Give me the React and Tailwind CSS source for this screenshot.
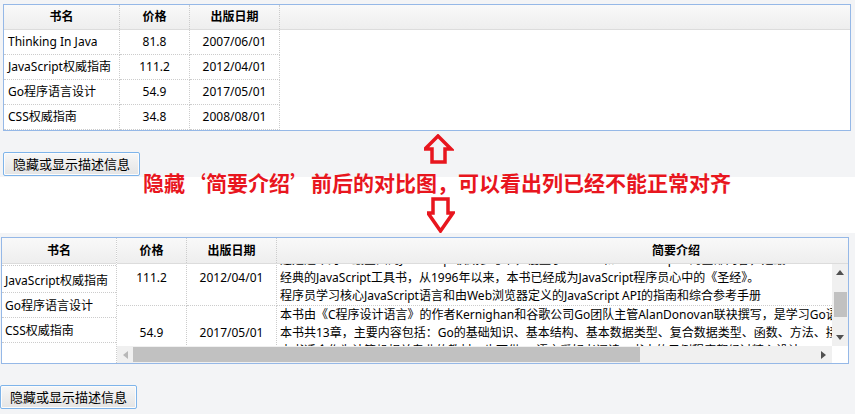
import React from "react";

const topRows = [
  { name: "Thinking In Java", price: "81.8", date: "2007/06/01" },
  { name: "JavaScript权威指南", price: "111.2", date: "2012/04/01" },
  { name: "Go程序语言设计", price: "54.9", date: "2017/05/01" },
  { name: "CSS权威指南", price: "34.8", date: "2008/08/01" },
];

const descRows = [
  {
    price: "111.2",
    date: "2012/04/01",
    lines: [
      "这是迄今为止最全面的JavaScript权威参考书，覆盖了HTML5和ECMAScript 5的全部内容，是最",
      "经典的JavaScript工具书，从1996年以来，本书已经成为JavaScript程序员心中的《圣经》。",
      "程序员学习核心JavaScript语言和由Web浏览器定义的JavaScript API的指南和综合参考手册",
    ],
  },
  {
    price: "54.9",
    date: "2017/05/01",
    lines: [
      "本书由《C程序设计语言》的作者Kernighan和谷歌公司Go团队主管AlanDonovan联袂撰写，是学习Go语言程序设计的权威指南。",
      "本书共13章，主要内容包括：Go的基础知识、基本结构、基本数据类型、复合数据类型、函数、方法、接口、goroutine、通道、共享变量的并发性、包、go工具、测试、反射等。",
      "本书适合作为计算机相关专业的教材，也可供Go语言爱好者阅读，书中的示例程序都经过精心设计。",
    ],
  },
];

const headCell =
  "h-full flex items-center justify-center font-bold border-r border-dotted border-[#ccc]";
const dotB = "border-b border-dotted border-[#ccc]";

function ToggleButton({ className }) {
  return (
    <button
      className={
        "h-[24px] w-[137px] border border-[#7eb4ea] rounded-[2px] bg-gradient-to-b from-[#f7f7f7] to-[#e4e4e4] shadow-[inset_0_0_0_1px_#fcfcfc] text-[13px] text-black leading-none " +
        className
      }
    >
      隐藏或显示描述信息
    </button>
  );
}

function GridHeader({ children }) {
  return (
    <div className="h-[26px] flex border-b border-[#dcdcdc] bg-gradient-to-b from-[#f9f9f9] to-[#eeeeee]">
      {children}
    </div>
  );
}

function TopGrid() {
  return (
    <div className="w-[848px] h-[127px] border border-[#95b8e7] bg-white flex flex-col">
      <div className="h-[25px] flex border-b border-[#dcdcdc] bg-gradient-to-b from-[#f9f9f9] to-[#eeeeee]">
        <div className={headCell + " w-[116px]"}>书名</div>
        <div className={headCell + " w-[70px]"}>价格</div>
        <div className={headCell + " w-[90px]"}>出版日期</div>
      </div>
      {topRows.map((r) => (
        <div key={r.name} className="h-[25px] flex">
          <div className={dotB + " w-[116px] border-r border-dotted flex items-center pl-[4px]"}>
            {r.name}
          </div>
          <div className={dotB + " w-[70px] border-r border-dotted flex items-center justify-center"}>
            {r.price}
          </div>
          <div className={dotB + " w-[90px] border-r border-dotted flex items-center justify-center"}>
            {r.date}
          </div>
        </div>
      ))}
    </div>
  );
}

function Arrow({ dir }) {
  // small triangle used by the scrollbar buttons
  const pts = {
    up: "0,5 4,0 8,5",
    down: "0,0 8,0 4,5",
    left: "5,0 5,8 0,4",
    right: "0,0 0,8 5,4",
  }[dir];
  const horizontal = dir === "left" || dir === "right";
  return (
    <svg width={horizontal ? 5 : 8} height={horizontal ? 8 : 5}>
      <polygon points={pts} fill={dir === "left" ? "#b8b8b8" : "#505050"} />
    </svg>
  );
}

function BottomGrid() {
  return (
    <div className="w-[848px] h-[127px] border border-[#95b8e7] bg-white flex">
      {/* frozen column */}
      <div className="w-[115px] shrink-0 border-r border-dotted border-[#ccc] flex flex-col">
        <GridHeader>
          <div className="w-full flex items-center justify-center font-bold">书名</div>
        </GridHeader>
        <div className={dotB + " h-[2px]"} />
        <div className={dotB + " h-[27px] flex items-center pl-[3px] pt-[3px]"}>JavaScript权威指南</div>
        <div className={dotB + " h-[25px] flex items-center pl-[3px] pt-[2px]"}>Go程序语言设计</div>
        <div className={dotB + " h-[25px] flex items-center pl-[3px] pt-[2px]"}>CSS权威指南</div>
      </div>

      {/* scrolling view */}
      <div className="flex-1 min-w-0 flex flex-col">
        <div className="overflow-hidden">
          <div className="h-[26px] w-[960px] flex border-b border-[#dcdcdc] bg-gradient-to-b from-[#f9f9f9] to-[#eeeeee]">
            <div className={headCell + " w-[70px]"}>价格</div>
            <div className={headCell + " w-[90px]"}>出版日期</div>
            <div className="w-[798px] h-full flex items-center justify-center font-bold">简要介绍</div>
          </div>
        </div>
        <div className="h-[82px] flex">
          <div className="flex-1 min-w-0 overflow-hidden">
            <div className="-mt-[13px]">
              {descRows.map((r) => (
                <div key={r.price} className="h-[55px] flex">
                  <div className={dotB + " w-[70px] shrink-0 border-r flex items-center justify-center"}>
                    {r.price}
                  </div>
                  <div className={dotB + " w-[90px] shrink-0 border-r flex items-center justify-center"}>
                    {r.date}
                  </div>
                  <div className={dotB + " flex-1 min-w-0 pl-[3px]"}>
                    {r.lines.map((l) => (
                      <div key={l} className="h-[18px] leading-[18px] whitespace-nowrap">
                        {l}
                      </div>
                    ))}
                  </div>
                </div>
              ))}
            </div>
          </div>
          <div className="w-[16px] shrink-0 bg-[#f0f0f0] flex flex-col items-center">
            <div className="h-[17px] flex items-center justify-center">
              <Arrow dir="up" />
            </div>
            <div className="h-[11px]" />
            <div className="w-[13px] h-[25px] bg-[#c1c1c1]" />
            <div className="flex-1" />
            <div className="h-[17px] flex items-center justify-center">
              <Arrow dir="down" />
            </div>
          </div>
        </div>
        <div className="h-[17px] flex">
          <div className="flex-1 flex items-center bg-[#f0f0f0]">
            <div className="w-[16px] h-full flex items-center justify-center">
              <Arrow dir="left" />
            </div>
            <div className="w-[507px] h-[15px] bg-[#c1c1c1]" />
            <div className="flex-1" />
            <div className="w-[17px] h-full flex items-center justify-center">
              <Arrow dir="right" />
            </div>
          </div>
          <div className="w-[16px] bg-white" />
        </div>
      </div>
    </div>
  );
}

export default function App() {
  return (
    <div className="relative w-[855px] h-[414px] overflow-hidden bg-white text-[12px] text-black font-['Noto_Sans','Noto_Sans_CJK_SC',sans-serif]">
      {/* before */}
      <section className="h-[177px] bg-[#f3f4f6] pt-[4px] pl-[3px]">
        <TopGrid />
        <ToggleButton className="mt-[21px]" />
      </section>

      {/* caption band */}
      <section className="h-[56px] bg-white" />

      {/* after */}
      <section className="h-[181px] bg-[#f3f4f6] pt-[4px] pl-[1px]">
        <BottomGrid />
        <ToggleButton className="mt-[21px] -ml-[1px]" />
      </section>

      {/* annotation */}
      <div className="absolute left-[143px] top-[170px] text-[21px] leading-[24px] font-bold text-[#e8161e] whitespace-nowrap font-['Noto_Sans_CJK_SC',sans-serif] [font-feature-settings:'fwid']">
        隐藏‘简要介绍’前后的对比图，可以看出列已经不能正常对齐
      </div>
      <svg className="absolute left-[424px] top-[134px]" width="30" height="30" viewBox="0 0 30 30">
        <polygon
          points="14,2 27,15 21,15 21,28 8,28 8,15 1,15"
          fill="#f3f4f6"
          stroke="#e8161e"
          strokeWidth="3.5"
        />
      </svg>
      <svg className="absolute left-[427px] top-[197px]" width="28" height="36" viewBox="0 0 28 36">
        <polygon
          points="6,2 21,2 21,16 26,16 13.5,34 1,16 6,16"
          fill="#ffffff"
          stroke="#e8161e"
          strokeWidth="3.5"
        />
      </svg>
    </div>
  );
}
